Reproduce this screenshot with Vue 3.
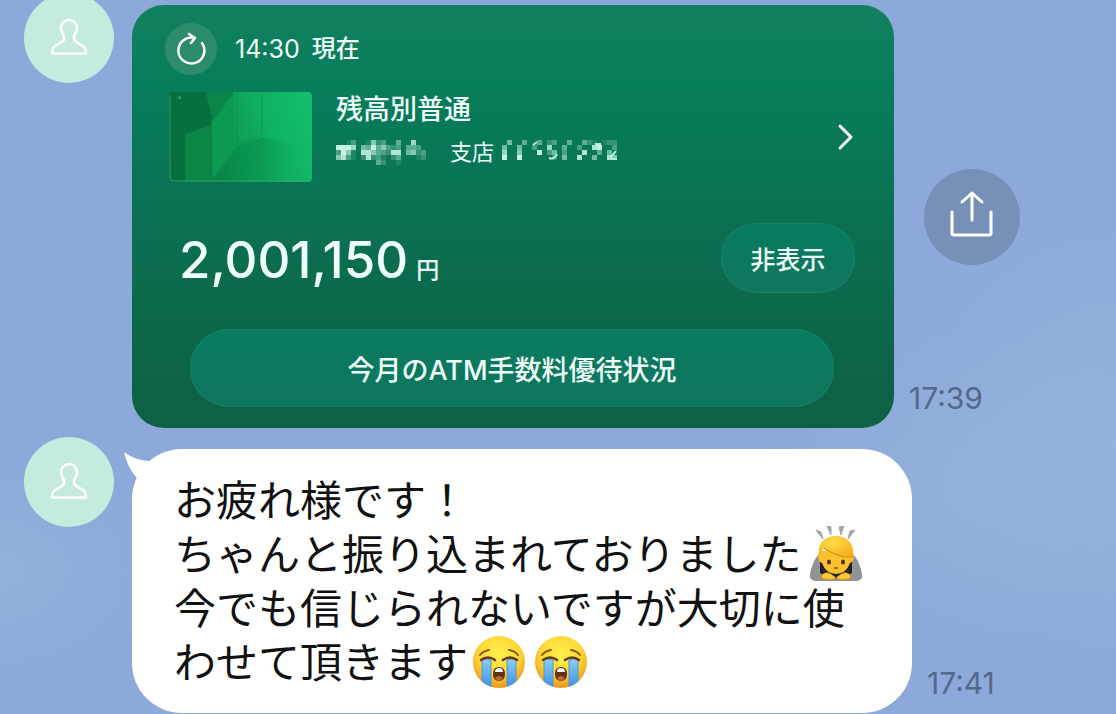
<script setup>
const branchMask = [
  '001300162300400700',
  '999705494632304430',
  '396108864328805623',
  '683102823102400012',
  '000000004200100000',
]
const numberMask = [
  '050040040230040042101220',
  '500500300700400300890030',
  '700600090350300080040500',
  '900900000020500800500860',
]

function cells(rows) {
  return rows.flatMap((row, y) =>
    [...row].map((v, x) => ({ x: x * 5, y: y * 5, o: Number(v) / 10 })).filter((c) => c.o > 0),
  )
}
const branchCells = cells(branchMask)
const numberCells = cells(numberMask)
const personPath =
  'M45 27c-5 0-8 4-8 8 0 3 1 5 2.500 7.500 1.500 3 .5 5-2 6.500l-7 4.500c-2 1.500-2.500 3-2.500 7h34c0-4-.5-5.500-2.500-7l-7-4.500c-2.500-1.500-3.500-3.500-2-6.500C52 40 53 38 53 35c0-4-3-8-8-8z'
</script>

<template>
  <main class="chat">
    <article class="row">
      <div class="avatar">
        <svg viewBox="0 0 90 90" aria-hidden="true"><path :d="personPath" /></svg>
      </div>
      <section class="card">
        <header class="status">
          <button class="refresh" type="button" aria-label="更新">
            <svg viewBox="0 0 52 52" aria-hidden="true"><path d="M37 20A13 13 0 1 1 30 15M24 11l6 4-4 5" /></svg>
          </button>
          <p><span>14:30</span><span class="now">現在</span></p>
        </header>
        <div class="account">
          <svg class="thumb" viewBox="0 0 143 90" aria-hidden="true">
            <defs>
              <linearGradient id="face" x1="0" y1=".3" x2="1" y2=".1">
                <stop offset="0" stop-color="#0b7e43" />
                <stop offset=".3" stop-color="#0f9350" />
                <stop offset=".65" stop-color="#10b161" />
                <stop offset="1" stop-color="#12bf6b" />
              </linearGradient>
              <linearGradient id="shade" x1="0" y1="0" x2="1" y2="0">
                <stop offset="0" stop-color="#078347" />
                <stop offset=".5" stop-color="#0a9853" stop-opacity=".8" />
                <stop offset="1" stop-color="#12b767" stop-opacity="0" />
              </linearGradient>
            </defs>
            <rect width="143" height="90" rx="4" fill="url(#face)" />
            <path d="M4 0h33l6 24-1 10-26 8v48H4q-4 0-4-4V4q0-4 4-4z" fill="#07703f" />
            <path d="M16 42l26-9v57H16z" fill="#0b8646" />
            <path d="M37 0h28L44 29z" fill="#0b864b" />
            <path d="M44 29L65 4v52L44 86z" fill="#0f9a54" />
            <path d="M44 90l25-36 24-9 50 14v27q0 4-4 4H44z" fill="url(#shade)" />
            <path d="M42 30v60M68 2v50M37 0l7 28L65 2M93 0v43l-24 9-25 36M16 90V42l26-9" fill="none" stroke="#0b753f" stroke-opacity=".35" />
            <path d="M8 5l4-1v4z" fill="#25a268" />
            <path d="M1 4v81q0 4 4 4h133q4 0 4-4" fill="none" stroke="#3da578" stroke-opacity=".8" />
          </svg>
          <div class="details">
            <h2>残高別普通</h2>
            <p class="branch">
              <svg class="mask-left" viewBox="0 0 90 25" aria-hidden="true">
                <rect v-for="(c, i) in branchCells" :key="i" :x="c.x" :y="c.y" width="5" height="5" :opacity="c.o" />
              </svg>
              <span>支店</span>
              <svg class="mask-right" viewBox="0 0 120 25" aria-hidden="true">
                <rect v-for="(c, i) in numberCells" :key="i" :x="c.x" :y="c.y" width="5" height="5" :opacity="c.o" />
                <path d="M31 5l4-3M47 18q5 2 8-4M93 4h6M108 18l6-7M109 19h6" />
              </svg>
            </p>
          </div>
          <button class="open" type="button" aria-label="口座の詳細">
            <svg viewBox="0 0 18 28" aria-hidden="true"><path d="M3 3l11 11L3 25" /></svg>
          </button>
        </div>
        <div class="balance">
          <p class="amount"><span>2,001,150</span><small>円</small></p>
          <button class="pill hide" type="button">非表示</button>
        </div>
        <button class="pill atm" type="button">今月のATM手数料優待状況</button>
      </section>
      <div class="side">
        <button class="share" type="button" aria-label="共有">
          <svg viewBox="0 0 96 96" aria-hidden="true"><path d="M28 43v21q0 2 2 2h35q2 0 2-2V43" /><path d="M48 51V24M38 33l10-9 10 9" /></svg>
        </button>
        <time>17:39</time>
      </div>
    </article>

    <article class="row">
      <div class="avatar">
        <svg viewBox="0 0 90 90" aria-hidden="true"><path :d="personPath" /></svg>
      </div>
      <div class="bubble">
        <svg class="tail" viewBox="0 0 44 40" aria-hidden="true"><path d="M0 3q12 9 27 9l17-4v30L13 29Q4 20 0 3z" /></svg>
        <p>
          お疲れ様です！<br />ちゃんと振り込まれておりました<svg class="emoji bow" viewBox="0 0 54 56" role="img" aria-label="お辞儀">
            <defs>
              <radialGradient id="hair" cx=".4" cy=".3" r=".8">
                <stop offset="0" stop-color="#ffdc4a" />
                <stop offset="1" stop-color="#f7ac18" />
              </radialGradient>
            </defs>
            <path d="M7 4l5 2 2 7zM18 0l4 1v8zM30 1l5-1-3 9zM41 5l5-1-7 9z" fill="#a4a5aa" stroke="#a4a5aa" stroke-linejoin="round" />
            <path d="M14 26C6 29 3 39 1 48c-1 5 2 7 7 7h38c5 0 8-2 7-7-2-9-5-19-13-22z" fill="#919296" />
            <path d="M11 35h32v12l-10 5H21l-10-5z" fill="#222126" />
            <path d="M11 25h32q3 4 1 9-1 3-3 3-4 11-14 11T13 37q-2 0-3-3-2-5 1-9z" fill="#fbc02e" />
            <path d="M10 31C8 18 15 10 27 10s19 9 17 21q-8 1-15-2-9-3-14-7-4 4-5 9z" fill="url(#hair)" />
            <path d="M15 22q5 4 14 7 7 3 15 2" fill="none" stroke="#df9715" stroke-width="1.500" />
            <ellipse cx="20" cy="36" rx="2" ry="2.500" fill="#513014" />
            <ellipse cx="34" cy="36" rx="2" ry="2.500" fill="#513014" />
            <path d="M25 42h4" fill="none" stroke="#8a5218" stroke-width="1.500" />
            <path d="M12 52q1-6 8-5l6 4v2q-7 2-14-1zM42 52q-1-6-8-5l-6 4v2q7 2 14-1z" fill="#ffc936" stroke="#d68e18" />
          </svg><br />今でも信じられないですが大切に使わせて頂きます<svg v-for="n in 2" :key="n" class="emoji" viewBox="0 0 54 56" role="img" aria-label="大泣き">
            <defs>
              <radialGradient :id="`skin${n}`" cx=".5" cy=".35" r=".65">
                <stop offset="0" stop-color="#fff04d" />
                <stop offset=".6" stop-color="#fdd835" />
                <stop offset="1" stop-color="#ed9420" />
              </radialGradient>
              <linearGradient :id="`tear${n}`" x1="0" y1="0" x2="0" y2="1">
                <stop offset="0" stop-color="#8dcdf5" />
                <stop offset="1" stop-color="#3b8fe5" />
              </linearGradient>
              <clipPath :id="`head${n}`"><circle cx="27" cy="28" r="26" /></clipPath>
            </defs>
            <circle cx="27" cy="28" r="26" :fill="`url(#skin${n})`" />
            <g :clip-path="`url(#head${n})`">
              <path d="M10 26q5-2 9 0v28h-9zM35 26q4-2 9 0v28h-9z" :fill="`url(#tear${n})`" stroke="#4b98ce" />
            </g>
            <path d="M9 26q7-5 14 0M31 26q7-5 14 0" fill="none" stroke="#6b3a0b" stroke-width="2.500" stroke-linecap="round" />
            <path d="M8 21q3-4 9-5M46 21q-3-4-9-5" fill="none" stroke="#8d5711" stroke-width="2" stroke-linecap="round" />
            <path d="M21 40q0-7 6-7t6 7-6 7-6-7z" fill="#633110" />
            <path d="M23 38q0-4 4-4t4 4z" fill="#fff" />
            <path d="M23 44q4-4 8 0-2 3-4 3t-4-3z" fill="#b66b38" />
          </svg>
        </p>
      </div>
      <div class="side">
        <time>17:41</time>
      </div>
    </article>
  </main>
</template>

<style>
body {
  margin: 0;
  background: #8ca9d9;
}
</style>

<style scoped>
.chat {
  display: flex;
  flex-direction: column;
  gap: 9px;
  box-sizing: border-box;
  min-height: 100vh;
  overflow: hidden;
  font-family: Inter, "Noto Sans CJK JP", sans-serif;
  background:
    radial-gradient(ellipse 22% 36% at 100% 62%, rgba(147, 180, 219, 0.9), rgba(147, 180, 219, 0)),
    radial-gradient(ellipse 20% 22% at 88% 68%, rgba(150, 177, 219, 0.8), rgba(150, 177, 219, 0)),
    radial-gradient(ellipse 14% 16% at 0% 80%, rgba(147, 178, 219, 0.9), rgba(147, 178, 219, 0)),
    #8ca9d9;
}
.row {
  display: flex;
  align-items: stretch;
  padding-left: 24px;
}
.row:first-child {
  margin-top: -7px;
}
.avatar {
  flex: none;
  width: 90px;
  height: 90px;
  margin-right: 18px;
  border-radius: 50%;
  background: #c5ebde;
}
.avatar svg {
  display: block;
  fill: none;
  stroke: #fff;
  stroke-width: 2.5;
  stroke-linejoin: round;
}
button {
  padding: 0;
  border: 0;
  background: none;
  color: inherit;
  font-family: inherit;
  cursor: pointer;
}
.card {
  display: flex;
  flex-direction: column;
  flex: 0 1 762px;
  box-sizing: border-box;
  margin-top: 12px;
  padding: 18px 39px 21px 33px;
  border-radius: 32px;
  color: #effffa;
  background: linear-gradient(#12805f 0%, #087d5c 18%, #087758 34%, #0b6f51 55%, #0d674a 76%, #0d6044 100%);
}
.status {
  display: flex;
  align-items: center;
  gap: 18px;
}
.status p {
  display: flex;
  gap: 12px;
  margin: 0;
  font-size: 25px;
  line-height: 36px;
}
.status .now {
  font-size: 24px;
  font-weight: 500;
}
.refresh {
  width: 52px;
  height: 52px;
  border-radius: 50%;
  background: #2d8c6e;
}
.refresh svg,
.open svg,
.share svg {
  display: block;
  fill: none;
  stroke: #fff;
  stroke-linecap: round;
  stroke-linejoin: round;
}
.refresh svg {
  stroke-width: 2.5;
}
.account {
  display: flex;
  align-items: center;
  margin-top: 17px;
  padding-left: 4px;
}
.thumb {
  flex: none;
  width: 143px;
  height: 90px;
}
.details {
  flex: 1;
  align-self: flex-start;
  margin-left: 24px;
}
h2 {
  margin: 0;
  font-size: 27px;
  line-height: 36px;
  font-weight: 500;
}
.branch {
  display: flex;
  align-items: center;
  margin: 7px 0 0;
  font-size: 22px;
  line-height: 34px;
}
.branch svg {
  fill: #dcfff3;
}
.mask-left {
  width: 90px;
  height: 25px;
  margin-right: 24px;
}
.mask-right {
  width: 120px;
  height: 25px;
  margin-left: 8px;
}
.mask-right path {
  fill: none;
  stroke: #b9eadb;
  stroke-width: 2;
}
.open svg {
  width: 18px;
  height: 28px;
  stroke-width: 3;
}
.balance {
  display: flex;
  align-items: center;
  justify-content: space-between;
  margin-top: 41px;
  padding-left: 14px;
}
.amount {
  display: flex;
  align-items: baseline;
  gap: 8px;
  margin: 0;
  padding-top: 4px;
  font-size: 51px;
  line-height: 66px;
  font-weight: 500;
}
.amount small {
  font-size: 23px;
  line-height: 30px;
}
.pill {
  border: 1px solid rgba(50, 150, 122, 0.35);
  background: linear-gradient(#087b5f, #0f765c);
  font-weight: 500;
}
.hide {
  width: 134px;
  height: 70px;
  border-radius: 35px;
  font-size: 25px;
}
.atm {
  height: 78px;
  margin: 36px 21px 0 25px;
  border-radius: 39px;
  font-size: 27px;
}
.side {
  display: flex;
  flex-direction: column;
  justify-content: flex-end;
  position: relative;
  flex: none;
  margin-left: 15px;
}
.share {
  position: absolute;
  top: 176px;
  left: 15px;
  width: 96px;
  height: 96px;
  border-radius: 50%;
  background: #7790b8;
}
.share svg {
  stroke-width: 3;
}
time {
  padding-bottom: 13px;
  color: #52688c;
  font-size: 30px;
  line-height: 34px;
}
.bubble {
  position: relative;
  flex: 0 1 780px;
  box-sizing: border-box;
  margin-top: 12px;
  padding: 26px 42px 22px;
  border-radius: 50px;
  background: #fff;
  color: #111;
}
.bubble p {
  margin: 0;
  font-family: "Liberation Sans", "Noto Sans CJK JP", sans-serif;
  font-size: 42px;
  line-height: 54px;
}
.tail {
  position: absolute;
  top: 0;
  left: -8px;
  width: 44px;
  height: 40px;
  fill: #fff;
}
.emoji {
  width: 54px;
  height: 56px;
  margin: -4px 4px;
  vertical-align: -8px;
}
.bow {
  margin: -4px 0 -4px 8px;
}
</style>
